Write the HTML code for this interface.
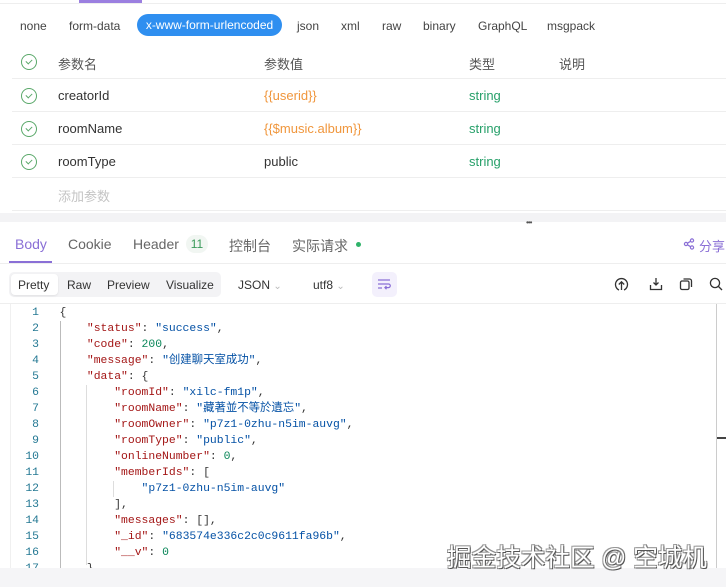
<!DOCTYPE html>
<html><head><meta charset="utf-8"><style>
*{margin:0;padding:0;box-sizing:border-box}
body{width:726px;height:587px;overflow:hidden;background:#fff;font-family:"Liberation Sans","Noto Sans CJK SC",sans-serif;position:relative;color:#333}
.a{position:absolute;white-space:nowrap}
.t{font-size:12px;color:#444;top:19px}
.hl{position:absolute;left:12px;right:0;height:1px;background:#eee}
.ck{position:absolute;left:21px;width:16px;height:16px;border:1.3px solid #5aa86a;border-radius:50%}
.ck:after{content:"";position:absolute;left:4px;top:3.5px;width:5px;height:3px;border-left:1.3px solid #5aa86a;border-bottom:1.3px solid #5aa86a;transform:rotate(-45deg)}
.r{font-size:13px;color:#333}
.str{color:#27a06a}
.code{font-family:"Liberation Mono","Noto Sans CJK SC",monospace;font-size:11.4px;line-height:16px}
.code div{white-space:pre}
.ln{display:inline-block;width:28px;text-align:right;color:#237893}
.k{color:#a31515}.s{color:#0451a5}.n{color:#098658}
</style></head><body>
<div class="a" style="left:79px;top:0;width:63px;height:3px;background:#9b7fe0"></div>
<div class="hl" style="top:3px;left:0"></div>
<div class="a t" style="left:20px">none</div>
<div class="a t" style="left:69px">form-data</div>
<div class="a" style="left:137px;top:14px;width:145px;height:22px;border-radius:11px;background:#2f8ff0;color:#fff;font-size:12px;line-height:22px;text-align:center">x-www-form-urlencoded</div>
<div class="a t" style="left:297px">json</div>
<div class="a t" style="left:341px">xml</div>
<div class="a t" style="left:382px">raw</div>
<div class="a t" style="left:423px">binary</div>
<div class="a t" style="left:478px">GraphQL</div>
<div class="a t" style="left:547px">msgpack</div>

<div class="ck" style="top:54px"></div>
<div class="a r" style="left:58px;top:54px;color:#555">参数名</div>
<div class="a r" style="left:264px;top:54px;color:#555">参数值</div>
<div class="a r" style="left:469px;top:54px;color:#555">类型</div>
<div class="a r" style="left:559px;top:54px;color:#555">说明</div>
<div class="hl" style="top:78px"></div>
<div class="ck" style="top:88px"></div>
<div class="a r" style="left:58px;top:88px">creatorId</div>
<div class="a r" style="left:264px;top:88px;color:#f0963c">{{userid}}</div>
<div class="a r str" style="left:469px;top:88px">string</div>
<div class="hl" style="top:111px"></div>
<div class="ck" style="top:121px"></div>
<div class="a r" style="left:58px;top:121px">roomName</div>
<div class="a r" style="left:264px;top:121px;color:#f0963c">{{$music.album}}</div>
<div class="a r str" style="left:469px;top:121px">string</div>
<div class="hl" style="top:144px"></div>
<div class="ck" style="top:154px"></div>
<div class="a r" style="left:58px;top:154px">roomType</div>
<div class="a r" style="left:264px;top:154px">public</div>
<div class="a r str" style="left:469px;top:154px">string</div>
<div class="hl" style="top:177px"></div>
<div class="a r" style="left:58px;top:186px;color:#c4c4c4">添加参数</div>
<div class="hl" style="top:210px"></div>
<div class="a" style="left:0;top:213px;width:726px;height:9px;background:#f3f3f5"></div>
<div class="a" style="left:526px;top:218px;font-size:8px;color:#555;letter-spacing:-1px">•••</div>

<div class="a" style="left:15px;top:236px;font-size:14px;color:#8a6fd6">Body</div>
<div class="a" style="left:9px;top:261px;width:43px;height:2px;background:#8a6fd6"></div>
<div class="a" style="left:68px;top:236px;font-size:14px;color:#666">Cookie</div>
<div class="a" style="left:133px;top:236px;font-size:14px;color:#666">Header</div>
<div class="a" style="left:186px;top:235px;width:22px;height:18px;border-radius:9px;background:#f1f6f2;font-size:12px;color:#3a9a5a;line-height:18px;text-align:center">11</div>
<div class="a" style="left:229px;top:236px;font-size:14px;color:#666">控制台</div>
<div class="a" style="left:292px;top:236px;font-size:14px;color:#666">实际请求</div>
<div class="a" style="left:356px;top:242px;width:5px;height:5px;border-radius:50%;background:#2fb36a"></div>
<svg class="a" style="left:683px;top:238px" width="12" height="12" viewBox="0 0 12 12" fill="none" stroke="#8a6fd6" stroke-width="1.2"><circle cx="9" cy="2.5" r="1.6"/><circle cx="3" cy="6" r="1.6"/><circle cx="9" cy="9.5" r="1.6"/><path d="M4.4 5.2L7.6 3.3M4.4 6.8L7.6 8.7"/></svg>
<div class="a" style="left:699px;top:236px;font-size:13px;color:#8a6fd6">分享</div>
<div class="hl" style="top:263px;left:0"></div>

<div class="a" style="left:9px;top:272px;width:212px;height:25px;border-radius:5px;background:#f3f3f5"></div>
<div class="a" style="left:11px;top:274px;width:47px;height:21px;border-radius:4px;background:#fff;box-shadow:0 1px 2px rgba(0,0,0,.08)"></div>
<div class="a" style="left:18px;top:278px;font-size:12px;color:#333">Pretty</div>
<div class="a" style="left:67px;top:278px;font-size:12px;color:#333">Raw</div>
<div class="a" style="left:107px;top:278px;font-size:12px;color:#333">Preview</div>
<div class="a" style="left:166px;top:278px;font-size:12px;color:#333">Visualize</div>
<div class="a" style="left:238px;top:278px;font-size:12px;color:#333">JSON <span style="color:#bbb;font-size:10px">&#8964;</span></div>
<div class="a" style="left:313px;top:278px;font-size:12px;color:#333">utf8 <span style="color:#bbb;font-size:10px">&#8964;</span></div>
<div class="a" style="left:372px;top:272px;width:25px;height:25px;border-radius:5px;background:#f3f0fc"></div>
<svg class="a" style="left:377px;top:278px" width="14" height="12" viewBox="0 0 14 12" fill="none" stroke="#8a6fd6" stroke-width="1.2"><path d="M1 2h12M1 6h10.5a1.8 1.8 0 010 3.6H8M9.5 8l-1.6 1.6 1.6 1.6M1 10h4"/></svg>
<svg class="a" style="left:614px;top:277px" width="15" height="15" viewBox="0 0 15 15" fill="none" stroke="#333" stroke-width="1.3"><path d="M5 13A6 6 0 1110 13"/><path d="M7.5 13V5M4.8 7.5L7.5 4.8 10.2 7.5"/></svg>
<svg class="a" style="left:649px;top:277px" width="14" height="14" viewBox="0 0 14 14" fill="none" stroke="#333" stroke-width="1.3"><path d="M7 1v7M4.5 5.5L7 8l2.5-2.5M1.5 8v4.5h11V8"/></svg>
<svg class="a" style="left:679px;top:277px" width="14" height="14" viewBox="0 0 14 14" fill="none" stroke="#333" stroke-width="1.3"><rect x="1.5" y="4" width="8.5" height="8.5" rx="1.5"/><path d="M4.5 2h6a2 2 0 012 2v6"/></svg>
<svg class="a" style="left:709px;top:277px" width="14" height="14" viewBox="0 0 14 14" fill="none" stroke="#333" stroke-width="1.3"><circle cx="6" cy="6" r="4.6"/><path d="M9.5 9.5L13 13"/></svg>
<div class="hl" style="top:303px;left:0"></div>

<div class="a" style="left:10px;top:304px;width:706px;height:264px;border-left:1px solid #f0f0f0;overflow:hidden">
<div style="position:absolute;left:49px;top:17px;width:1px;height:260px;background:#bbb"></div>
<div style="position:absolute;left:75px;top:81px;width:1px;height:180px;background:#ddd"></div>
<div style="position:absolute;left:102px;top:177px;width:1px;height:16px;background:#ddd"></div>
<div class="code" style="position:absolute;left:0;top:1px">
<div><span class="ln">1</span>   {</div>
<div><span class="ln">2</span>       <span class="k">"status"</span>: <span class="s">"success"</span>,</div>
<div><span class="ln">3</span>       <span class="k">"code"</span>: <span class="n">200</span>,</div>
<div><span class="ln">4</span>       <span class="k">"message"</span>: <span class="s">"创建聊天室成功"</span>,</div>
<div><span class="ln">5</span>       <span class="k">"data"</span>: {</div>
<div><span class="ln">6</span>           <span class="k">"roomId"</span>: <span class="s">"xilc-fm1p"</span>,</div>
<div><span class="ln">7</span>           <span class="k">"roomName"</span>: <span class="s">"藏著並不等於遺忘"</span>,</div>
<div><span class="ln">8</span>           <span class="k">"roomOwner"</span>: <span class="s">"p7z1-0zhu-n5im-auvg"</span>,</div>
<div><span class="ln">9</span>           <span class="k">"roomType"</span>: <span class="s">"public"</span>,</div>
<div><span class="ln">10</span>           <span class="k">"onlineNumber"</span>: <span class="n">0</span>,</div>
<div><span class="ln">11</span>           <span class="k">"memberIds"</span>: [</div>
<div><span class="ln">12</span>               <span class="s">"p7z1-0zhu-n5im-auvg"</span></div>
<div><span class="ln">13</span>           ],</div>
<div><span class="ln">14</span>           <span class="k">"messages"</span>: [],</div>
<div><span class="ln">15</span>           <span class="k">"_id"</span>: <span class="s">"683574e336c2c0c9611fa96b"</span>,</div>
<div><span class="ln">16</span>           <span class="k">"__v"</span>: <span class="n">0</span></div>
<div><span class="ln">17</span>       }</div>
</div>
</div>
<div class="a" style="left:716px;top:304px;width:1px;height:264px;background:#ccc"></div>
<div class="a" style="left:717px;top:437px;width:9px;height:2px;background:#444"></div>
<div class="a" style="left:0;top:568px;width:726px;height:19px;background:#f5f5f7"></div>
<div class="a" style="left:447px;top:538px;font-size:24.6px;color:#fff;text-shadow:1px 1px 0 #555,-1px -1px 0 #999,1px -1px 0 #888,-1px 1px 0 #888">掘金技术社区 @ 空城机</div>
</body></html>
